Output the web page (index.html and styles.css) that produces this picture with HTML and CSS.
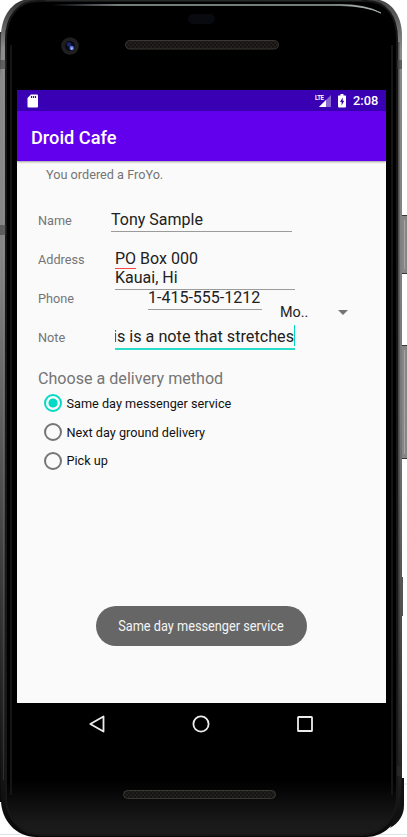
FILE: index.html
```html
<!DOCTYPE html>
<html lang="en">
<head>
<meta charset="utf-8">
<title>Droid Cafe</title>
<link rel="stylesheet" href="styles.css">
</head>
<body>
<div class="phone">
  <svg class="device" width="407" height="837" viewBox="0 0 407 837" aria-hidden="true">
    <defs>
      <linearGradient id="side" x1="0" y1="0" x2="0" y2="1">
        <stop offset="0" stop-color="#303030"/><stop offset=".06" stop-color="#8a8a8a"/>
        <stop offset=".3" stop-color="#858585"/><stop offset=".55" stop-color="#555"/>
        <stop offset=".8" stop-color="#2b2b2b"/><stop offset="1" stop-color="#080808"/>
      </linearGradient>
      <linearGradient id="rside" x1="0" y1="0" x2="0" y2="1">
        <stop offset="0" stop-color="#444"/><stop offset=".06" stop-color="#8a8a88"/>
        <stop offset=".5" stop-color="#777"/><stop offset=".8" stop-color="#44433f"/>
        <stop offset=".92" stop-color="#24231f"/><stop offset="1" stop-color="#080808"/>
      </linearGradient>
      <linearGradient id="face" x1="0" y1="0" x2="0" y2="1">
        <stop offset="0" stop-color="#000"/><stop offset=".935" stop-color="#000"/>
        <stop offset=".985" stop-color="#191919"/><stop offset="1" stop-color="#1b1b1b"/>
      </linearGradient>
      <linearGradient id="shine" x1="0" y1="0" x2="1" y2="0">
        <stop offset="0" stop-color="#667" stop-opacity="0"/><stop offset=".2" stop-color="#8a9292"/>
        <stop offset=".85" stop-color="#899391"/><stop offset="1" stop-color="#c5cecb"/>
      </linearGradient>
      <pattern id="mesh" width="4" height="4" patternUnits="userSpaceOnUse">
        <rect width="4" height="4" fill="#171513"/><circle cx="1" cy="1" r=".9" fill="#26231f"/><circle cx="3" cy="3" r=".9" fill="#26231f"/>
      </pattern>
      <clipPath id="lefthalf"><rect width="204" height="837"/></clipPath>
      <clipPath id="righthalf"><rect x="204" width="203" height="837"/></clipPath>
      <path id="body" d="M31-1H372C390-1 402 14 402 36V798C402 818 387 837 366 837H36C16 837 1 820 1 800V36C1 16 13-1 31-1Z"/>
    </defs>
    <path d="M0 834.500H407M402 784H407" stroke="#e2e2e6"/>
    <rect x="0" y="32" width="3" height="770" fill="url(#side)"/>
    <use href="#body" fill="url(#side)" clip-path="url(#lefthalf)"/>
    <use href="#body" fill="url(#rside)" clip-path="url(#righthalf)"/>
    <path d="M38 1H366C387 1 397 17 397 39V796C397 818 382 835 361 835H41C21 835 6 818 6 798V39C6 17 18 1 38 1Z" fill="url(#face)" stroke="#171717" stroke-width="2"/>
    <path d="M11 45V795M392 45V795" stroke="#151515" stroke-width="2"/>
    <path d="M3.500 42V780" stroke="#aaa" stroke-opacity=".18"/>
    <path d="M398.500 42V770" stroke="#222" stroke-opacity=".55" stroke-width="2"/>
    <path d="M45 .5H362" stroke="#252927"/>
    <path d="M52 4.500H340Q366 4.500 381 13Q366 6 340 5.500H52Z" fill="url(#shine)" stroke="url(#shine)" stroke-width=".7"/>
    <path d="M0 60H6V69H0ZM397 60H402V69H397ZM0 225H6V235H0Z" fill="#3b3b3b" fill-opacity=".55"/>
    <path d="M397 766H402V776H397Z" fill="#292825"/>
    <path d="M402 778H404V805Q404 820 390 828L400 806Z" fill="#111"/>
    <g fill="#868686" stroke="#353535" stroke-width="1">
      <path d="M402 215.500H408V273.500H402M402 345.500H408V458.500H402"/>
    </g>
    <path d="M404.500 220V269M404.500 350V454" stroke="#a6a6a6" stroke-width="1"/>
    <path d="M402.500 577V616" stroke="#555"/>
    <rect x="188" y="14" width="27" height="10" rx="5" fill="#080a0f"/>
    <circle cx="70" cy="46" r="8.800" fill="#201f1f"/>
    <circle cx="70" cy="46" r="5" fill="#07091d"/>
    <circle cx="69" cy="44.500" r="2.200" fill="#1d2869"/>
    <circle cx="71.700" cy="48" r="2.200" fill="#6379d8"/><circle cx="71.800" cy="48.500" r=".9" fill="#b8c2ff"/>
    <g fill="url(#mesh)" stroke="#3a3835">
      <rect x="125.500" y="40.500" width="153" height="8.500" rx="4.200"/>
      <rect x="123.500" y="790.500" width="152" height="8" rx="4"/>
    </g>
  </svg>

  <main class="screen">
    <div class="status">
      <svg width="12" height="14" viewBox="0 0 12 14"><path d="M4 .5H10Q11 .5 11 1.500V12.500Q11 13.500 10 13.500H1.500Q.5 13.500 .5 12.500V4Z" fill="#fff"/><path d="M4.500 2V4M6.500 2V4M8.500 2V4" stroke="#3900b4" stroke-width="1.200"/></svg>
      <span class="spacer"></span>
      <span class="signal"><span class="lte">LTE</span><svg width="12" height="12" viewBox="0 0 12 12"><path d="M12 0V12H0Z" fill="#8a68d1"/><path d="M7 5V12H0Z" fill="#fff"/></svg></span>
      <svg class="battery" width="8" height="14" viewBox="0 0 8 14"><path d="M2.500 0H5.500V1.500H7.500Q8 1.500 8 2V12.500Q8 13.500 7 13.500H1Q0 13.500 0 12.500V2Q0 1.500 .5 1.500H2.500Z" fill="#fff"/><path d="M4.700 3.500 2 8H3.600V11.500L6.200 6.800H4.700Z" fill="#3900b4"/></svg>
      <span class="clock">2:08</span>
    </div>
    <header class="appbar"><h1>Droid Cafe</h1></header>
    <section class="content">
      <p class="order">You ordered a FroYo.</p>
      <div class="form">
        <label>Name</label>
        <div class="field name">Tony Sample</div>
        <label>Address</label>
        <div class="field address"><span class="typo">PO</span> Box 000<br>Kauai, Hi</div>
        <label>Phone</label>
        <div class="phone-row">
          <div class="field number">1-415-555-1212</div>
          <div class="spinner">Mo..<span class="caret"></span></div>
        </div>
        <label>Note</label>
        <div class="field note"><span>This is a note that stretches</span></div>
      </div>
      <h2>Choose a delivery method</h2>
      <ul class="options">
        <li><span class="radio on"></span>Same day messenger service</li>
        <li><span class="radio"></span>Next day ground delivery</li>
        <li><span class="radio"></span>Pick up</li>
      </ul>
      <div class="toast"><span>Same day messenger service</span></div>
    </section>
  </main>
  <nav class="nav">
    <svg width="18" height="18" viewBox="0 0 18 18"><path d="M15.500 1.500V16.500L2.300 9Z"/></svg>
    <svg width="18" height="18" viewBox="0 0 18 18"><circle cx="9" cy="9" r="7.600"/></svg>
    <svg width="18" height="18" viewBox="0 0 18 18"><rect x="2" y="2" width="14" height="14" rx=".6"/></svg>
  </nav>
</div>
</body>
</html>
```
FILE: styles.css
```css
* { box-sizing: border-box; }
body { margin: 0; background: #fff; font-family: Roboto, sans-serif; overflow: hidden; }
h1, h2, p, ul { margin: 0; padding: 0; font-weight: 400; }
svg { display: block; }
.phone { position: relative; width: 407px; height: 837px; padding: 90px 21px 0 17px; }
.device { position: absolute; inset: 0; }
.screen { position: relative; height: 613px; background: #fafafa; display: flex; flex-direction: column; }
.status { height: 21px; background: #3900b4; display: flex; align-items: center; padding: 0 8px 0 10px; color: #fff; }
.spacer { flex: 1; }
.signal { display: flex; align-items: flex-end; height: 13px; }
.lte { font-size: 7.500px; font-weight: 700; line-height: 7px; width: 4px; white-space: nowrap; align-self: flex-start; letter-spacing: -.5px; transform: scaleX(.8); transform-origin: left; z-index: 1; }
.battery { margin: 0 7px 0 7px; }
.clock { font-size: 12.800px; font-weight: 500; line-height: 21px; width: 25px; white-space: nowrap; }
.appbar { height: 50px; background: #6200ee; box-shadow: 0 1px 2px rgba(0,0,0,.38); display: flex; align-items: center; padding: 2px 14px 0; }
h1 { color: #fff; font-size: 18.200px; font-weight: 500; }
.content { flex: 1; display: flex; flex-direction: column; }
.order { padding: 6px 0 0 29px; height: 40px; font-size: 12.700px; line-height: 16px; color: #757575; }
.form { display: grid; grid-template-columns: 77px 1fr; grid-auto-rows: 39px; padding-left: 21px; }
label { font-size: 12.700px; line-height: 39px; color: #757575; }
.field { color: #212121; font-size: 16px; line-height: 19px; border-bottom: 1px solid #9b9b9b; white-space: nowrap; align-self: start; }
.name { width: 181px; height: 31px; padding-top: 9px; margin-left: -4px; }
.address { width: 180px; height: 50px; padding-top: 9px; }
.typo { box-shadow: 0 1px #ff4545; display: inline-block; height: 18px; line-height: 18px; }
.phone-row { display: flex; align-items: flex-start; padding-left: 33px; }
.number { width: 114px; height: 31px; padding-top: 9px; }
.spinner { display: flex; align-items: center; color: #212121; font-size: 14.400px; line-height: 20px; margin: 24px 0 0 18px; width: 68px; justify-content: space-between; }
.caret { border: 5px solid transparent; border-top: 5px solid #757575; border-bottom: 0; margin-top: -2px; }
.note { width: 180px; height: 32px; padding-top: 7px; border-bottom: 2px solid #29dcc8; display: flex; justify-content: flex-end; overflow: hidden; font-size: 16.200px; }
.note span { border-right: 1px solid #03dac5; height: 21px; line-height: 24px; }
h2 { color: #757575; font-size: 16.100px; line-height: 20px; padding: 12px 0 0 21px; }
.options { list-style: none; padding: 0 0 0 26.500px; }
.options li { height: 28.700px; display: flex; align-items: center; font-size: 12.700px; color: #111; gap: 5px; }
.radio { width: 18px; height: 18px; border: 2px solid #757575; border-radius: 50%; }
.on { border-color: #03dac5; background: radial-gradient(circle, #03dac5 4.200px, transparent 4.900px); }
.toast { margin: auto 0 57.500px 78.500px; width: 211px; height: 40px; border-radius: 20px; background: #666; color: #f4f4f4; font-size: 14px; line-height: 41px; display: flex; justify-content: center; }
.toast span { transform: scaleX(.91); white-space: nowrap; }
.nav { position: relative; height: 42px; display: flex; justify-content: space-between; align-items: center; padding: 0 72px 0 71px; }
.nav svg { fill: none; stroke: #ececec; stroke-width: 1.800; stroke-linejoin: round; }
```
